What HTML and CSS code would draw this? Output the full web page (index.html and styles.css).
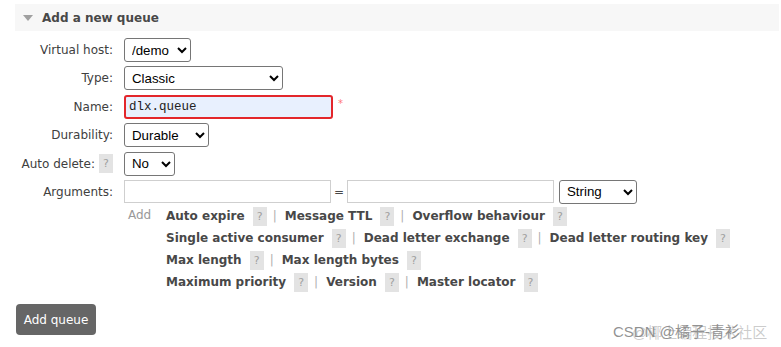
FILE: index.html
```html
<!DOCTYPE html>
<html>
	<head>
		<meta charset="utf-8" />
		<title>Add a new queue</title>
		<link rel="stylesheet" href="styles.css">
	</head>
	<body>
		<main>
			<h2 class="section-head"><span class="arrow"></span>Add a new queue</h2>
			<form class="queue-form">
				<label class="field-label">Virtual host:</label>
				<div class="field"><select class="sel sel-vhost"><option>/demo</option></select></div>

				<label class="field-label">Type:</label>
				<div class="field"><select class="sel sel-type"><option>Classic</option></select></div>

				<label class="field-label">Name:</label>
				<div class="field"><input type="text" class="name-input" value="dlx.queue" /><span class="mand">*</span></div>

				<label class="field-label">Durability:</label>
				<div class="field"><select class="sel sel-dur"><option>Durable</option></select></div>

				<label class="field-label">Auto delete: <span class="help">?</span></label>
				<div class="field"><select class="sel sel-auto"><option>No</option></select></div>

				<label class="field-label">Arguments:</label>
				<div class="field">
					<input type="text" class="arg-input" />
					<span class="equals">=</span>
					<input type="text" class="arg-input" />
					<select class="sel sel-str"><option>String</option></select>
				</div>

				<div></div>
				<div class="add-args">
					<span class="add-label">Add</span>
					<div class="arg-links">
						<div class="arg-line">
							<b>Auto expire</b><span class="help">?</span><span class="sep">|</span>
							<b>Message TTL</b><span class="help">?</span><span class="sep">|</span>
							<b>Overflow behaviour</b><span class="help">?</span>
						</div>
						<div class="arg-line">
							<b>Single active consumer</b><span class="help">?</span><span class="sep">|</span>
							<b>Dead letter exchange</b><span class="help">?</span><span class="sep">|</span>
							<b>Dead letter routing key</b><span class="help">?</span>
						</div>
						<div class="arg-line">
							<b>Max length</b><span class="help">?</span><span class="sep">|</span>
							<b>Max length bytes</b><span class="help">?</span>
						</div>
						<div class="arg-line">
							<b>Maximum priority</b><span class="help">?</span><span class="sep">|</span>
							<b>Version</b><span class="help">?</span><span class="sep">|</span>
							<b>Master locator</b><span class="help">?</span>
						</div>
					</div>
				</div>
			</form>
			<button class="btn-add" type="button">Add queue</button>
		</main>
		<div class="watermark">CSDN @橘子-青衫<span class="wm-under">@椰上编程技术社区</span></div>
	</body>
</html>
```

FILE: styles.css
```css
body {
	margin: 0;
	background: #fff;
	font-family: 'DejaVu Sans', Verdana, sans-serif;
	font-size: 12px;
	color: #484848;
}
main {
	padding: 4px 2px 0 15px;
}
.section-head {
	display: flex;
	align-items: center;
	margin: 0;
	height: 27px;
	padding-left: 8px;
	background: #f7f7f7;
	font-size: 12px;
	font-weight: bold;
	color: #484848;
}
.arrow {
	width: 0;
	height: 0;
	margin-right: 9px;
	border-left: 5px solid transparent;
	border-right: 5px solid transparent;
	border-top: 6px solid #a0a0a0;
}
.queue-form {
	display: grid;
	grid-template-columns: 98px auto;
	grid-template-rows: repeat(6, 24px) auto;
	column-gap: 11px;
	row-gap: 4.4px;
	margin-top: 7px;
}
.field-label {
	display: flex;
	align-items: center;
	justify-content: flex-end;
	gap: 4px;
	white-space: nowrap;
	color: #404040;
}
.field {
	display: flex;
	align-items: center;
}
.sel {
	height: 24px;
	padding: 0 2px 0 3px;
	border: 1px solid #767676;
	border-radius: 3px;
	background: #fff;
	font-family: 'Liberation Sans', Arial, sans-serif;
	font-size: 13.3px;
	color: #000;
}
.sel-vhost { width: 67px; }
.sel-type { width: 159px; }
.sel-dur { width: 85px; }
.sel-auto { width: 51px; }
.sel-str { width: 78px; margin-left: 5px; }
.name-input {
	box-sizing: border-box;
	width: 209px;
	height: 24px;
	padding: 0 3px;
	border: 2px solid #e3262b;
	border-radius: 3px;
	background: #e8f0fe;
	font-family: 'Liberation Mono', 'Courier New', monospace;
	font-size: 12.5px;
	color: #222;
	outline: none;
}
.mand {
	align-self: flex-start;
	margin: 3px 0 0 5px;
	color: #f77;
	font-size: 10px;
}
.arg-input {
	box-sizing: border-box;
	width: 207px;
	height: 23px;
	border: 1px solid #cfcfcf;
	border-radius: 0;
	background: #fff;
}
.equals {
	width: 16px;
	text-align: center;
	font-size: 12px;
}
.help {
	display: inline-flex;
	align-items: center;
	justify-content: center;
	width: 14px;
	height: 19px;
	background: #e3e3e3;
	color: #a0a0a0;
	font-weight: normal;
	font-size: 11px;
}
.add-args {
	display: flex;
	margin-top: -3px;
	margin-left: 4px;
}
.add-label {
	width: 38px;
	line-height: 20px;
	color: #999;
}
.arg-links {
	display: flex;
	flex-direction: column;
}
.arg-line {
	display: flex;
	align-items: center;
	height: 22px;
	white-space: nowrap;
}
.arg-line b {
	color: #484848;
	margin-right: 8px;
}
.sep {
	margin: 0 8px 0 6px;
	color: #b0b0b0;
}
.btn-add {
	display: block;
	margin-top: 11px;
	margin-left: 1px;
	width: 80px;
	height: 31px;
	border: none;
	border-radius: 4px;
	background: #666;
	color: #fff;
	font-family: 'DejaVu Sans', Verdana, sans-serif;
	font-size: 12px;
}
.watermark {
	position: absolute;
	left: 613px;
	top: 320px;
	font-family: 'Liberation Sans', 'Noto Sans CJK SC', sans-serif;
	font-size: 15px;
	color: rgba(110, 110, 110, 0.75);
	white-space: nowrap;
}
.wm-under {
	position: absolute;
	left: 19px;
	top: 1px;
	color: rgba(140, 140, 140, 0.45);
}
```
